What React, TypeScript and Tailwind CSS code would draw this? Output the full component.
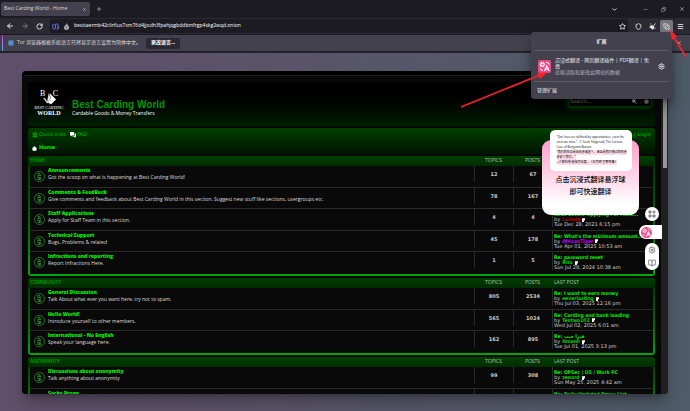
import React from "react";
import {
  ArrowLeft, ArrowRight, RotateCw, X, Plus, ChevronDown, Minus, Copy, Star, Shield,
  Puzzle, Menu, Settings, House, BookOpen, Power, Info,
} from "lucide-react";

type Post = { title: string; user: string; color: string; date: string };
type Forum = { name: string; text: string; topics: number; posts: number; last: Post };
type Group = { name: string; grid: string; forums: Forum[] };

const GREEN = "text-[#00d000]";

const groups: Group[] = [
  {
    name: "HOME",
    grid: "h-[108px]",
    forums: [
      { name: "Announcements", text: "Got the scoop on what is happening at Best Carding World!", topics: 12, posts: 67, last: { title: "", user: "", color: GREEN, date: "" } },
      { name: "Comments & FeedBack", text: "Give comments and feedback about Best Carding World in this section. Suggest new stuff like sections, usergroups etc.", topics: 78, posts: 167, last: { title: "", user: "", color: GREEN, date: "" } },
      { name: "Staff Applications", text: "Apply for Staff Team in this section.", topics: 4, posts: 4, last: { title: "Read Before Applying For Mark...", user: "Ludwig", color: "text-[#b00000]", date: "Tue Dec 28, 2021 6:15 pm" } },
      { name: "Technical Support", text: "Bugs, Problems & related", topics: 45, posts: 178, last: { title: "Re: What's the minimum amount...", user: "AfricanTiger", color: "text-[#b400ff]", date: "Tue Apr 01, 2025 10:53 am" } },
      { name: "Infractions and reporting", text: "Report Infractions Here.", topics: 1, posts: 5, last: { title: "Re: password reset", user: "Rizx", color: GREEN, date: "Sun Jul 28, 2024 10:38 am" } },
    ],
  },
  {
    name: "COMMUNITY",
    grid: "h-[65px]",
    forums: [
      { name: "General Discussion", text: "Talk About what ever you want here, try not to spam.", topics: 805, posts: 2534, last: { title: "Re: I want to earn money", user: "eeverlasting", color: GREEN, date: "Thu Jul 03, 2025 12:16 pm" } },
      { name: "Hello World!", text: "Introduce yourself to other members.", topics: 565, posts: 1024, last: { title: "Re: Carding and bank loading", user: "Tentwo102", color: GREEN, date: "Wed Jul 02, 2025 6:01 am" } },
      { name: "International - No English", text: "Speak your language here.", topics: 162, posts: 895, last: { title: "Re: فيزا جيب", user: "Hmanh", color: GREEN, date: "Tue Jul 01, 2025 3:13 pm" } },
    ],
  },
  {
    name: "ANONYMITY",
    grid: "h-[43px]",
    forums: [
      { name: "Discussions about anonymity", text: "Talk anything about anonymity", topics: 99, posts: 308, last: { title: "Re: OPSec | OS / Work PC", user: "zenord", color: GREEN, date: "Sun May 25, 2025 4:42 am" } },
      { name: "Socks Proxy", text: "", topics: 0, posts: 0, last: { title: "Re: Daily Updated Proxy List", user: "", color: GREEN, date: "" } },
    ],
  },
];

const cols = "grid grid-cols-[minmax(0,1fr)_39px_39px_101px]";
const countCell = "h-4 border-l border-[#2a2a2a] text-center text-[5px] leading-[17px] font-bold text-[#ccc]";

function ForumIcon() {
  return (
    <svg viewBox="0 0 22 22" className="mt-[5px] size-[11px] shrink-0" fill="none" stroke="#2f8f2f" strokeWidth="1.6">
      <circle cx="11" cy="11" r="10" />
      <path d="M8 5h4v4H8zM12 9h3M8 9v8h6v-4h-5M11 13v4" />
    </svg>
  );
}

function TranslateMark({ className }: { className: string }) {
  return (
    <svg viewBox="0 0 26 26" className={className} fill="none">
      <rect width="26" height="26" rx="4" fill="#ee4a86" />
      <circle cx="8.500" cy="9" r="5" fill="#fff" />
      <path d="M5 9h7M8.500 5.500v7" stroke="#ee4a86" strokeWidth="1.300" />
      <path d="M16 5h2a4 4 0 0 1 4 4M10 21H9a4 4 0 0 1-4-4" stroke="#fff" strokeWidth="2" />
      <path d="M13 22l4.500-10L22 22M14.500 18.500h6" stroke="#fff" strokeWidth="2.400" />
    </svg>
  );
}

function LastPost({ post }: { post: Post }) {
  return (
    <div className="h-[18px] border-l border-[#2a2a2a] pt-[3px] pl-px text-[5px] leading-[5px] whitespace-nowrap text-[#d0d0d0]">
      {post.title && <a href="#" className="block font-['DejaVu_Sans_Condensed','DejaVu_Sans',sans-serif] font-bold text-[#00e800]">{post.title}</a>}
      {post.user && (
        <p className="flex items-center gap-0.5">
          by <a href="#" className={`font-['DejaVu_Sans_Condensed','DejaVu_Sans',sans-serif] font-bold ${post.color}`}>{post.user}</a>
          <svg viewBox="0 0 8 10" className="h-1 w-[3px]"><path d="M0 0h8v5L5 7v3H0z" fill="#fff" /></svg>
        </p>
      )}
      {post.date && <p>{post.date}</p>}
    </div>
  );
}

function ForumRow({ forum }: { forum: Forum }) {
  return (
    <li className={`${cols} overflow-hidden border-b border-[#2a2a2a] last:border-b-0`}>
      <div className="flex min-w-0 gap-[3px] pl-1">
        <ForumIcon />
        <div className="min-w-0 pt-px font-['Open_Sans',sans-serif] text-[5px] whitespace-nowrap">
          <a href="#" className="block leading-[7px] font-extrabold text-[#00f000]">{forum.name}</a>
          {forum.text && <p className="leading-[6px] text-[#ddd]">{forum.text}</p>}
        </div>
      </div>
      <div className={countCell}>{forum.topics || null}</div>
      <div className={countCell}>{forum.posts || null}</div>
      <LastPost post={forum.last} />
    </li>
  );
}

function ForumGroup({ group }: { group: Group }) {
  return (
    <section className="shrink-0 rounded-[3px] bg-linear-to-b from-[#003800] via-[#006000] to-[#00a800] px-0.5 pb-0.5">
      <header className={`${cols} -mx-0.5 h-2.5 items-center rounded-t-[3px] bg-linear-to-b from-[#004000] to-[#002c00] px-0.5 font-['Open_Sans',sans-serif] text-[5px] text-[#b4c4b4]`}>
        <h2 className="font-semibold text-[#00a000]">{group.name}</h2>
        <span className="text-center">TOPICS</span>
        <span className="text-center">POSTS</span>
        <span className="pl-0.5">LAST POST</span>
      </header>
      <ul className={`grid auto-rows-fr bg-[#090909] ${group.grid}`}>
        {group.forums.map((f) => <ForumRow key={f.name} forum={f} />)}
      </ul>
    </section>
  );
}

function Browser() {
  return (
    <>
      <div className="flex h-[18px] shrink-0 items-center bg-[#1c1b22] px-px text-[#ddd]">
        <div className="flex h-[14px] w-[89px] items-center justify-between rounded-[2px] bg-[#42414d] px-[3px]">
          <span className="text-[5px]">Best Carding World - Home</span>
          <button aria-label="Close tab"><X className="size-[5px]" /></button>
        </div>
        <button aria-label="New tab" className="ml-1.5"><Plus className="size-[6px]" /></button>
        <div className="ml-auto flex items-center gap-[13px] pr-1">
          <button aria-label="List tabs" className="mr-3"><ChevronDown className="size-[7px]" strokeWidth={3} /></button>
          <button aria-label="Minimize"><Minus className="size-[5px]" /></button>
          <button aria-label="Restore"><Copy className="size-[5px] -scale-x-100" /></button>
          <button aria-label="Close window"><X className="size-[6px]" /></button>
        </div>
      </div>
      <div className="flex h-[17px] shrink-0 items-center gap-[7px] border-b border-[#1c1b22] bg-[#2b2a33] px-1.5 text-[#eee]">
        <button aria-label="Back"><ArrowLeft className="size-2" strokeWidth={3} /></button>
        <button aria-label="Forward" className="text-[#77767e]"><ArrowRight className="size-2" strokeWidth={3} /></button>
        <button aria-label="Reload"><RotateCw className="size-[7px]" strokeWidth={3} /></button>
        <div className="flex h-[14px] min-w-0 flex-1 items-center gap-1 rounded-[2px] bg-[#1c1b22] px-0.5">
          <svg viewBox="0 0 16 16" className="size-[7px]" fill="none" strokeWidth="2">
            <path d="M2 2v9a3 3 0 0 0 6 0V5a3 3 0 0 1 6 0v9" stroke="#4f8ff5" />
            <path d="M6 2v2M10 13v2M14 8v6" stroke="#b45cf0" />
          </svg>
          <svg viewBox="0 0 16 16" className="size-[7px]" fill="#aaa">
            <path d="M9 0C9 4 14 6 14 11a6 5 0 0 1-12 0C2 7 7 5 9 0z" />
            <path d="M8 7v7" stroke="#444" />
          </svg>
          <input aria-label="Address" defaultValue="besttaermb42clir6ux7xm76d4jjodh3fpahjqgbddbmfrgp4skg2wqd.onion" className="min-w-0 flex-1 bg-transparent text-[5px] font-medium text-white outline-none" />
          <button aria-label="Bookmark"><Star className="size-[7px]" strokeWidth={3} /></button>
        </div>
        <button aria-label="Security level"><Shield className="size-[7px]" strokeWidth={3} /></button>
        <button aria-label="New identity">
          <svg viewBox="0 0 16 16" className="size-[7px]" fill="currentColor" stroke="currentColor">
            <path d="M15 1L10 7" strokeWidth="2" />
            <path d="M7 5l5 4-3 6-8-6z" />
            <path d="M3 2h2M2 5h1M13 12h2" strokeWidth="2" />
          </svg>
        </button>
        <button aria-label="Extensions" className="-mx-[3px] grid size-[13px] place-items-center rounded-[2px] bg-[#77767f]"><Puzzle className="size-[7px] -rotate-90" strokeWidth={3} /></button>
        <button aria-label="Menu"><Menu className="size-[7px]" strokeWidth={3} /></button>
      </div>
      <div className="flex h-[18px] shrink-0 items-center gap-[3px] border-b-2 border-[#23222b] bg-[#42414d] pr-2 text-[5px] text-[#ddd]">
        <span className="ml-0.5 h-4 w-px bg-linear-to-b from-[#c22ee0] to-[#4aa8e8]" />
        <Info className="ml-0.5 size-[6px] rounded-full bg-[#69aef5] text-[#34455e]" strokeWidth={3} />
        <p>Tor 浏览器根据系统语言已将显示语言设置为简体中文。</p>
        <button className="ml-0.5 h-[11px] w-[34px] rounded-[2px] bg-[#2b2a33] font-bold text-white">更改语言...</button>
        <button aria-label="Dismiss" className="ml-auto"><X className="size-[6px]" /></button>
      </div>
    </>
  );
}

function ExtensionsPanel() {
  return (
    <aside className="absolute top-8 right-[18px] flex h-[67px] w-[141px] flex-col rounded-[3px] bg-[#42414d] px-[3px] text-[5px] text-[#e8e8ee] shadow-lg shadow-black/60">
      <h2 className="border-b border-[#5b5a66] text-center leading-[18px] font-bold">扩展</h2>
      <div className="flex h-[31px] items-center gap-1 border-b border-[#5b5a66] px-1">
        <TranslateMark className="size-[13px] shrink-0" />
        <div className="min-w-0 flex-1 leading-[6px]">
          <p className="w-24 break-all">沉浸式翻译 - 网页翻译插件 | PDF翻译 | 免费</p>
          <p className="text-[#b5b5bf]">总能读取和更改此网站的数据</p>
        </div>
        <button aria-label="Extension settings"><Settings className="size-[7px]" strokeWidth={3} /></button>
      </div>
      <a href="#" className="pl-[3px] leading-[17px]">管理扩展</a>
    </aside>
  );
}

function TranslateHint() {
  return (
    <aside className="absolute top-[140px] right-[51px] flex h-[75px] w-[97px] flex-col items-center rounded-[9px] bg-linear-to-b from-[#ff9ccb] to-white to-85% text-center text-black">
      <div className="-mt-[10px] h-[41px] w-[82px] shrink-0 rounded-[5px] bg-white pt-[5px] pr-1 pl-[7px] text-left text-[3px] leading-[5px] whitespace-nowrap">
        <p>"Our lives are defined by opportunities, even the</p>
        <p>ones we miss." - F. Scott Fitzgerald, The Curious</p>
        <p>Case of Benjamin Button.</p>
        <p className="w-fit bg-[#ffdcea]">"我们的生命是由机会来定义，甚至是我们错过的机会</p>
        <p className="w-fit bg-[#ffdcea]">会定义我们。"</p>
        <p className="w-fit bg-[#ffdcea]">—F·斯科特·菲茨杰拉德，《本杰明·巴顿奇事》</p>
      </div>
      <p className="pt-[3px] text-[7px] leading-[12px] font-medium">点击沉浸式翻译悬浮球<br />即可快速翻译</p>
    </aside>
  );
}

function FloatingTools() {
  return (
    <div className="absolute top-[207px] right-7 flex w-[23px] flex-col items-end gap-1 text-[#555]">
      <button aria-label="Tools" className="mr-[3px] grid size-[14px] place-items-center rounded-full bg-white">
        <svg viewBox="0 0 16 16" className="size-2" fill="none" stroke="currentColor" strokeWidth="1.700">
          <path d="M2 2h4v4H2zM2 10h4v4H2zM10 10h4v4h-4zM12 1v6M9 4h6" />
        </svg>
      </button>
      <button aria-label="Translate page" className="flex h-[14px] w-[23px] items-center rounded-l-full bg-white pl-0.5">
        <TranslateMark className="size-[11px] rounded-full" />
      </button>
      <div className="mr-[3px] flex h-[27px] w-[14px] flex-col items-center justify-around rounded-full bg-white">
        <button aria-label="Settings"><Settings className="block size-2" /></button>
        <button aria-label="Guide"><BookOpen className="block size-2" /></button>
      </div>
    </div>
  );
}

function Site() {
  return (
    <main className="flex min-h-0 flex-1 bg-linear-to-r from-[#604f6b] via-[#585568] to-[#4e5b68] px-[22px] pt-[18px] pb-[17px]">
      <div className="flex min-w-0 flex-1 overflow-hidden rounded-[4px] bg-black pt-1 font-['DejaVu_Sans',sans-serif] shadow-lg shadow-black/30">
        <div className="flex min-w-0 flex-1 flex-col gap-0.5 rounded-t-[4px] border-t border-r border-[#202020] bg-[#080808] px-1.5 pt-1.5">
          <header className="flex h-11 shrink-0 items-start rounded-[3px] bg-linear-to-b from-black to-[#002000] pr-[3px] pl-1.5">
            <div className="flex w-[30px] flex-col items-center pt-2 font-['Liberation_Serif',serif] text-white">
              <div className="flex w-[18px] justify-between text-[8px] leading-[8px]"><span>B</span><span>C</span></div>
              <svg viewBox="0 0 16 15" className="-mt-1.5 h-[14px] w-[13px]">
                <path d="M7 0l3 8-5 5-5-7 3 1 2 4z" fill="#ddd" />
                <path d="M8 0l8 8-6 6-4-2 4-4z" fill="#fff" />
              </svg>
              <span className="text-[4px] leading-[4px] whitespace-nowrap">BEST CARDING</span>
              <span className="text-[6px] leading-[6px] font-bold">WORLD</span>
            </div>
            <div className="pt-[17px] pl-2">
              <h1 className="font-['Liberation_Sans',sans-serif] text-[10px] leading-[11px] font-bold text-[#009600]">Best Carding World</h1>
              <p className="font-['Open_Sans',sans-serif] text-[5px] leading-[6px] font-medium text-white">Cardable Goods & Money Transfers</p>
            </div>
            <form className="mt-[14px] ml-auto flex h-[11px] w-[84px] items-center rounded-[2px] border border-[#004800] bg-[#050505] text-white shadow-[0_0_4px_#008000]">
              <input aria-label="Search" placeholder="Search…" className="min-w-0 flex-1 bg-transparent pl-px text-[5px] outline-none placeholder:text-[#aaa]" />
              <button type="button" aria-label="Search" className="grid w-3 place-items-center">
                <svg viewBox="0 0 10 10" className="size-[5px]" stroke="#fff" fill="#fff" strokeWidth="2">
                  <circle cx="3.500" cy="3.500" r="2.500" />
                  <path d="M5 5l4 4" />
                </svg>
              </button>
              <button type="button" aria-label="Advanced search" className="grid w-[11px] place-items-center border-l border-[#222]"><Settings className="size-[5px]" strokeWidth={4} /></button>
            </form>
          </header>
          <nav className="h-[26px] shrink-0 rounded-[3px] bg-linear-to-b from-[#004000] to-[#001400] px-1 text-[5px] text-[#00c000]">
            <div className="flex h-[14px] items-center gap-1 border-b border-[#002800] pt-px">
              <a href="#" className="flex items-center gap-px"><Menu className="size-[6px]" strokeWidth={4} />Quick links</a>
              <a href="#" className="flex items-center gap-px">
                <svg viewBox="0 0 12 12" className="size-[6px]" fill="#fff">
                  <path d="M0 0h8v7H4L2 9V7H0z" />
                  <path d="M9 3h3v6h-1v3L8 9H5V8h4z" />
                </svg>
                FAQ
              </a>
              <a href="#" className="ml-auto flex items-center gap-px"><Power className="size-[5px]" />Login</a>
            </div>
            <a href="#" className="flex h-3 items-center gap-0.5 font-bold text-[#00e800]"><House className="size-[5px] text-white" fill="white" />Home</a>
          </nav>
          {groups.map((g) => <ForumGroup key={g.name} group={g} />)}
        </div>
        <div className="w-1.5 shrink-0 bg-[#202020] pt-6"><div className="mx-px h-[69px] bg-[#969696]" /></div>
      </div>
    </main>
  );
}

export default function App() {
  return (
    <div className="relative flex h-screen flex-col overflow-hidden bg-[#585568] font-['Open_Sans','Noto_Sans_CJK_SC',sans-serif]">
      <Browser />
      <Site />
      <TranslateHint />
      <FloatingTools />
      <ExtensionsPanel />
      <svg viewBox="0 0 240 120" className="pointer-events-none absolute top-0 right-0 h-[120px] w-[240px]" fill="#f5222d" stroke="#f5222d">
        <path d="M11 107L90 75" strokeWidth="1.800" />
        <path d="M98 72l-8 7-3-6z" stroke="none" />
        <path d="M236 57L223 36" strokeWidth="1.800" />
        <path d="M220 30l7 6-5 4z" stroke="none" />
      </svg>
    </div>
  );
}
